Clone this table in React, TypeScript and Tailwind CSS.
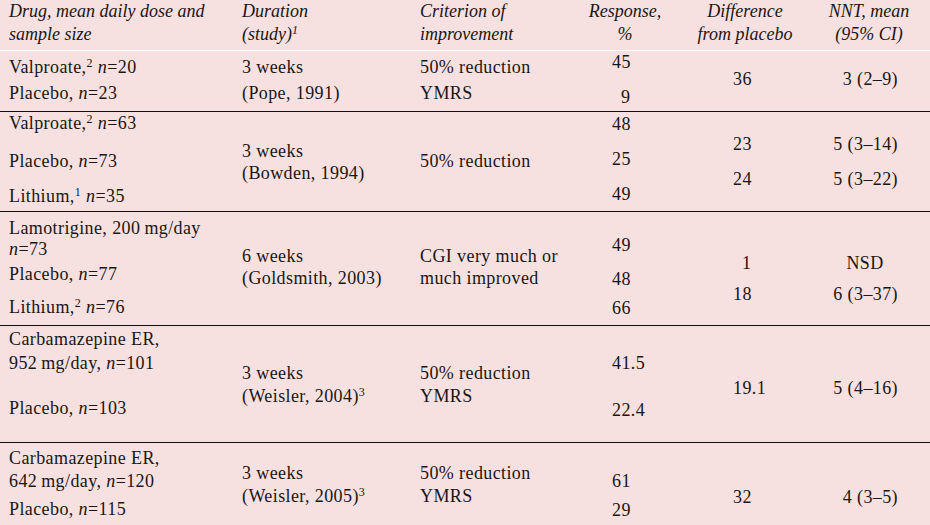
const N = ({ v }: { v: string }) => (
  <>
    <i>n</i>={v}
  </>
)

const Sup = ({ c }: { c: string }) => <sup className="text-[12px]">{c}</sup>

const cols = 'grid grid-cols-[242px_178px_140px_130px_110px_130px]'

export default function App() {
  return (
    <div className="h-[525px] w-[930px] overflow-hidden bg-[#f7e1e0] font-['Liberation_Serif',serif] text-[18px] tracking-[0.4px] text-[#1a1614]">
      {/* header */}
      <div className={cols + ' h-[51px] border-b border-white italic leading-[23px] tracking-normal'}>
        <div className="pl-[9px]">
          <div>Drug, mean daily dose and</div>
          <div>sample size</div>
        </div>
        <div>
          <div>Duration</div>
          <div>
            (study)<Sup c="1" />
          </div>
        </div>
        <div>
          <div>Criterion of</div>
          <div>improvement</div>
        </div>
        <div className="text-center">
          <div>Response,</div>
          <div>%</div>
        </div>
        <div className="text-center">
          <div>Difference</div>
          <div>from placebo</div>
        </div>
        <div className="pl-[8px] text-center">
          <div>NNT, mean</div>
          <div>(95% CI)</div>
        </div>
      </div>

      {/* Pope 1991 */}
      <div className={cols + ' h-[61px] border-b border-[#111] leading-[22px]'}>
        <div className="flex flex-col pl-[9px]">
          <div className="mt-[5px]">
            Valproate,<Sup c="2" /> <N v="20" />
          </div>
          <div className="mt-[4px]">
            Placebo, <N v="23" />
          </div>
        </div>
        <div className="flex flex-col">
          <div className="mt-[5px]">3 weeks</div>
          <div className="mt-[4px]">(Pope, 1991)</div>
        </div>
        <div className="flex flex-col">
          <div className="mt-[5px]">50% reduction</div>
          <div className="mt-[4px]">YMRS</div>
        </div>
        <div className="flex flex-col pl-[52px]">
          <div>45</div>
          <div className="mt-[13px] pl-[9px]">9</div>
        </div>
        <div className="flex flex-col pl-[43px]">
          <div className="mt-[17px]">36</div>
        </div>
        <div className="flex flex-col">
          <div className="mt-[17px] pr-[32px] text-right">3 (2–9)</div>
        </div>
      </div>

      {/* Bowden 1994 */}
      <div className={cols + ' h-[100px] border-b border-[#111] leading-[22px]'}>
        <div className="flex flex-col pl-[9px]">
          <div>
            Valproate,<Sup c="2" /> <N v="63" />
          </div>
          <div className="mt-[16px]">
            Placebo, <N v="73" />
          </div>
          <div className="mt-[13px]">
            Lithium,<Sup c="1" /> <N v="35" />
          </div>
        </div>
        <div className="flex flex-col">
          <div className="mt-[28px]">3 weeks</div>
          <div className="mt-0">(Bowden, 1994)</div>
        </div>
        <div className="flex flex-col">
          <div className="mt-[38px]">50% reduction</div>
        </div>
        <div className="flex flex-col pl-[52px]">
          <div className="mt-[1px]">48</div>
          <div className="mt-[13px]">25</div>
          <div className="mt-[13px]">49</div>
        </div>
        <div className="flex flex-col pl-[43px]">
          <div className="mt-[21px]">23</div>
          <div className="mt-[13px]">24</div>
        </div>
        <div className="flex flex-col">
          <div className="mt-[21px] pr-[32px] text-right">5 (3–14)</div>
          <div className="mt-[13px] pr-[32px] text-right">5 (3–22)</div>
        </div>
      </div>

      {/* Goldsmith 2003 */}
      <div className={cols + ' h-[114px] border-b border-[#111] leading-[22px]'}>
        <div className="flex flex-col pl-[9px]">
          <div className="mt-[5px]">Lamotrigine, 200&thinsp;mg/day</div>
          <div className="-mt-px">
            <N v="73" />
          </div>
          <div className="mt-[3px]">
            Placebo, <N v="77" />
          </div>
          <div className="mt-[11px]">
            Lithium,<Sup c="2" /> <N v="76" />
          </div>
        </div>
        <div className="flex flex-col">
          <div className="mt-[33px]">6 weeks</div>
          <div className="mt-0">(Goldsmith, 2003)</div>
        </div>
        <div className="flex flex-col">
          <div className="mt-[33px]">CGI very much or</div>
          <div className="mt-0">much improved</div>
        </div>
        <div className="flex flex-col pl-[52px]">
          <div className="mt-[22px]">49</div>
          <div className="mt-[12px]">48</div>
          <div className="mt-[7px]">66</div>
        </div>
        <div className="flex flex-col pl-[43px]">
          <div className="mt-[40px] pl-[9px]">1</div>
          <div className="mt-[9px]">18</div>
        </div>
        <div className="flex flex-col">
          <div className="mt-[40px] text-center">NSD</div>
          <div className="mt-[9px] pr-[32px] text-right">6 (3–37)</div>
        </div>
      </div>

      {/* Weisler 2004 */}
      <div className={cols + ' h-[117px] border-b border-[#111] leading-[22px]'}>
        <div className="flex flex-col pl-[9px]">
          <div className="mt-[2px]">Carbamazepine ER,</div>
          <div className="mt-[2px]">
            952&thinsp;mg/day, <N v="101" />
          </div>
          <div className="mt-[23px]">
            Placebo, <N v="103" />
          </div>
        </div>
        <div className="flex flex-col">
          <div className="mt-[36px]">3 weeks</div>
          <div className="mt-px">
            (Weisler, 2004)<Sup c="3" />
          </div>
        </div>
        <div className="flex flex-col">
          <div className="mt-[36px]">50% reduction</div>
          <div className="mt-px">YMRS</div>
        </div>
        <div className="flex flex-col pl-[52px]">
          <div className="mt-[26px]">41.5</div>
          <div className="mt-[25px]">22.4</div>
        </div>
        <div className="flex flex-col pl-[43px]">
          <div className="mt-[51px]">19.1</div>
        </div>
        <div className="flex flex-col">
          <div className="mt-[51px] pr-[32px] text-right">5 (4–16)</div>
        </div>
      </div>

      {/* Weisler 2005 */}
      <div className={cols + ' leading-[22px]'}>
        <div className="flex flex-col pl-[9px]">
          <div className="mt-[4px]">Carbamazepine ER,</div>
          <div className="mt-px">
            642&thinsp;mg/day, <N v="120" />
          </div>
          <div className="mt-[6px]">
            Placebo, <N v="115" />
          </div>
        </div>
        <div className="flex flex-col">
          <div className="mt-[19px]">3 weeks</div>
          <div className="mt-px">
            (Weisler, 2005)<Sup c="3" />
          </div>
        </div>
        <div className="flex flex-col">
          <div className="mt-[19px]">50% reduction</div>
          <div className="mt-px">YMRS</div>
        </div>
        <div className="flex flex-col pl-[52px]">
          <div className="mt-[27px]">61</div>
          <div className="mt-[7px]">29</div>
        </div>
        <div className="flex flex-col pl-[43px]">
          <div className="mt-[43px]">32</div>
        </div>
        <div className="flex flex-col">
          <div className="mt-[43px] pr-[32px] text-right">4 (3–5)</div>
        </div>
      </div>
    </div>
  )
}
